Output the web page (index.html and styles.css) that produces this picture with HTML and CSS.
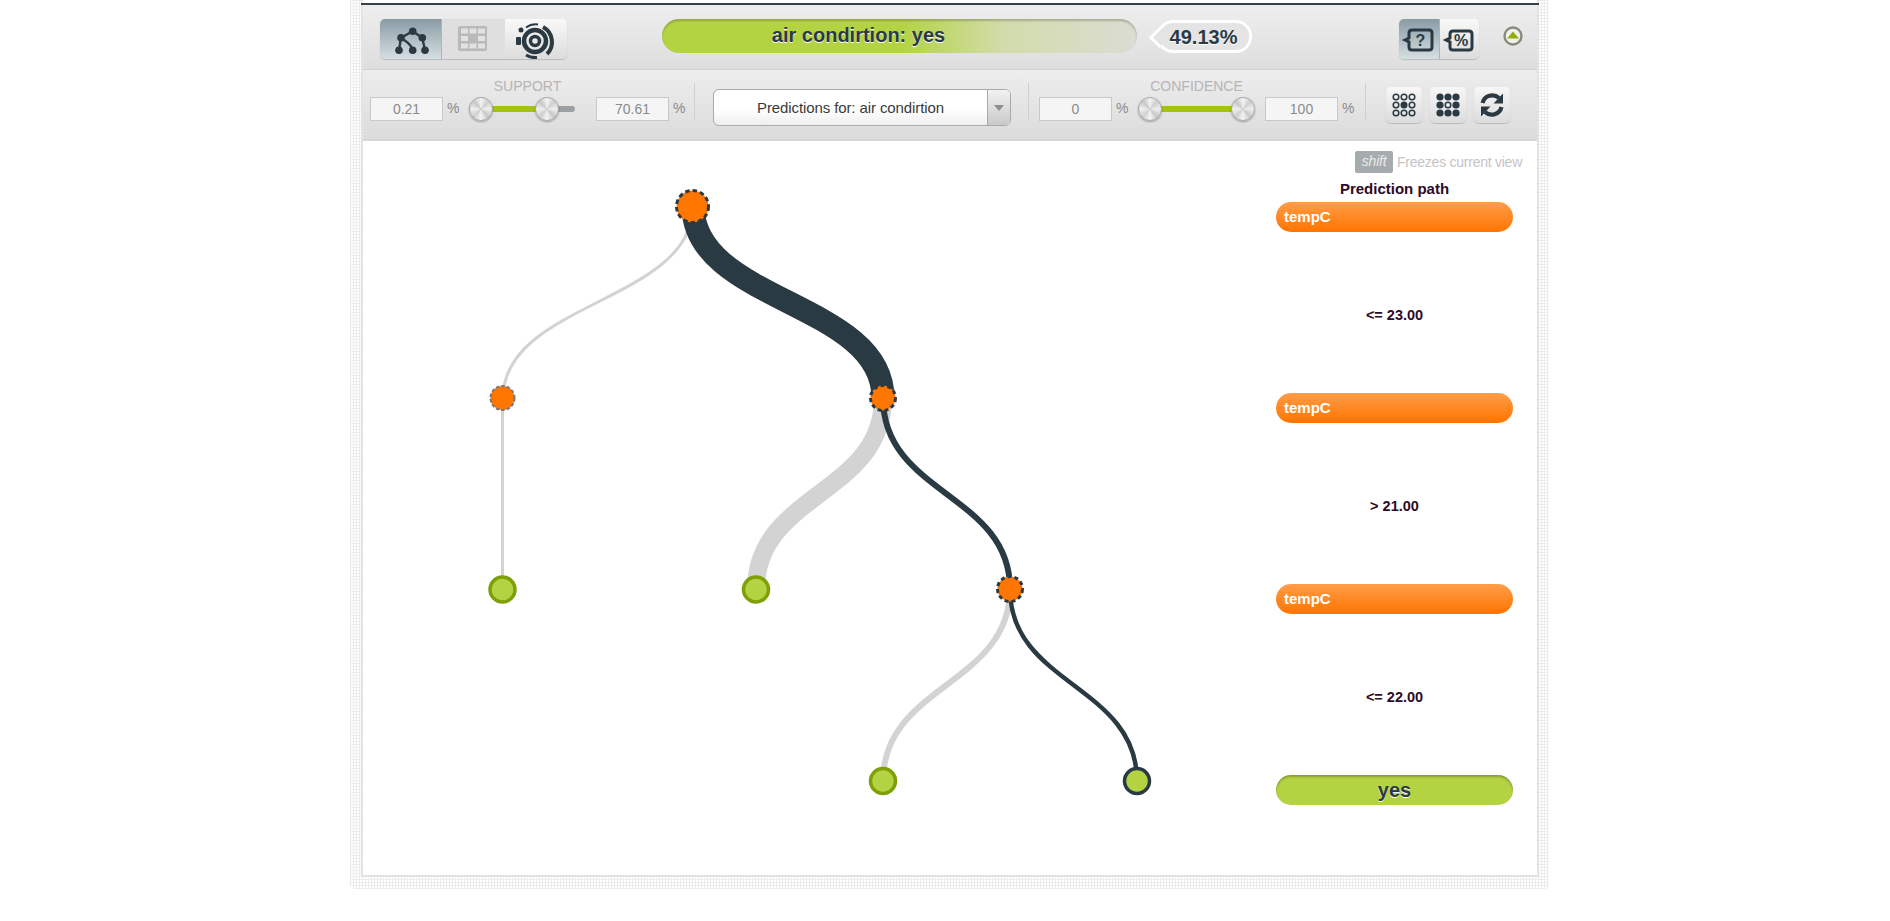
FILE: index.html

```html
<!DOCTYPE html>
<html>

<head>
    <meta charset="utf-8">
    <title>Decision tree</title>
    <link rel="stylesheet" href="styles.css">
</head>

<body>
<div class="frame">
    <div class="panel">
        <div class="topline"></div>

        <!--first toolbar row-->
        <div class="bar-top">
            <div class="btn-group views">
                <div class="tb active">
                    <svg viewBox="0 0 61 40" width="61" height="40">
                        <g fill="none" stroke="#2b3a42" stroke-width="2.400">
                            <path d="M32.700 12.300L21 18.700M32.700 12.300L42.300 18.700M21 18.700L19 31.300M42.300 18.700L45 31.300M21 18.700C26 23 31 24 32.700 31.300"/>
                        </g>
                        <g fill="#2b3a42">
                            <circle cx="32.700" cy="12.300" r="3.800"/>
                            <circle cx="21" cy="18.700" r="3.800"/>
                            <circle cx="42.300" cy="18.700" r="3.800"/>
                            <circle cx="19" cy="31.300" r="3.800"/>
                            <circle cx="32.700" cy="31.300" r="3.800"/>
                            <circle cx="45" cy="31.300" r="3.800"/>
                        </g>
                    </svg>
                </div>
                <div class="tb disabled">
                    <svg viewBox="0 0 63 40" width="63" height="40">
                        <rect x="16" y="7" width="29" height="25" rx="2" fill="#b9b9b9"/>
                        <g fill="#e2e2e2">
                            <rect x="19" y="9.500" width="7" height="5"/>
                            <rect x="27.500" y="9.500" width="7" height="5"/>
                            <rect x="36" y="9.500" width="7" height="5"/>
                            <rect x="19" y="17" width="7" height="5"/>
                            <rect x="36" y="17" width="7" height="5"/>
                            <rect x="19" y="24.500" width="7" height="5"/>
                            <rect x="27.500" y="24.500" width="7" height="5"/>
                            <rect x="36" y="24.500" width="7" height="5"/>
                        </g>
                    </svg>
                </div>
                <div class="tb">
                    <svg viewBox="0 0 62 40" width="62" height="40">
                        <g fill="none" stroke="#2b3a42">
                            <circle cx="30" cy="22" r="4.500" stroke-width="3.500"/>
                            <circle cx="30" cy="22" r="11" stroke-width="4.500"/>
                            <path d="M38 8A17 17 0 0 1 42 35" stroke-width="4"/>
                            <path d="M21 8.500A17 17 0 0 1 33 5.500" stroke-width="2"/>
                            <path d="M21 36A17 17 0 0 0 32 38.500" stroke-width="3"/>
                        </g>
                        <g fill="#2b3a42">
                            <circle cx="16" cy="11" r="2.500"/>
                            <rect x="11" y="18" width="5" height="8" rx="1"/>
                        </g>
                    </svg>
                </div>
            </div>

            <div class="progress">air condirtion: yes</div>
            <div class="bubble">49.13%</div>

            <div class="btn-group modes">
                <div class="tb active">
                    <svg viewBox="0 0 40 40" width="40" height="40">
                        <path d="M13 11H30Q33 11 33 14V28Q33 31 30 31H13Q10 31 10 28V23L6 21L10 19V14Q10 11 13 11Z" fill="none" stroke="#2b3a42" stroke-width="3"/>
                        <text x="21.500" y="26.500" class="icon-text">?</text>
                    </svg>
                </div>
                <div class="tb">
                    <svg viewBox="0 0 39 40" width="39" height="40">
                        <path d="M13 12H29Q32 12 32 15V28Q32 31 29 31H13Q10 31 10 28V23L6 21L10 19V15Q10 12 13 12Z" fill="none" stroke="#2b3a42" stroke-width="3"/>
                        <text x="21" y="27" class="icon-text">%</text>
                    </svg>
                </div>
            </div>

            <svg class="collapse" viewBox="0 0 20 20" width="20" height="20">
                <circle cx="10" cy="10" r="8.500" fill="#f1f1e6" stroke="#858a80" stroke-width="2.400"/>
                <path d="M4 12.500L10 5.500L16 12.500Z" fill="#8fae0c"/>
            </svg>
        </div>

        <!--second toolbar row-->
        <div class="bar-filters">
            <div class="range">
                <div class="range-label">SUPPORT</div>
                <div class="num">0.21</div>
                <div class="pct">%</div>
                <div class="slider">
                    <div class="track"></div>
                    <div class="fill" style="left:22px;width:66px"></div>
                    <div class="thumb" style="left:10px"></div>
                    <div class="thumb" style="left:76px"></div>
                </div>
                <div class="num">70.61</div>
                <div class="pct">%</div>
            </div>
            <div class="sep sep-a"></div>
            <div class="select">
                <div class="select-text">Predictions for: air condirtion</div>
                <div class="select-arrow"></div>
            </div>
            <div class="sep sep-b"></div>
            <div class="range range-conf">
                <div class="range-label">CONFIDENCE</div>
                <div class="num">0</div>
                <div class="pct">%</div>
                <div class="slider">
                    <div class="track"></div>
                    <div class="fill" style="left:22px;width:93px"></div>
                    <div class="thumb" style="left:10px"></div>
                    <div class="thumb" style="left:103px"></div>
                </div>
                <div class="num">100</div>
                <div class="pct">%</div>
            </div>
            <div class="sep sep-c"></div>
            <div class="tools">
                <div class="tool">
                    <svg viewBox="0 0 36 36" width="36" height="36">
                        <g fill="none" stroke="#2b3a42" stroke-width="1.500">
                            <circle cx="10" cy="10" r="2.800"/>
                            <circle cx="18" cy="10" r="2.800"/>
                            <circle cx="26" cy="10" r="2.800"/>
                            <circle cx="10" cy="18" r="2.800"/>
                            <circle cx="26" cy="18" r="2.800"/>
                            <circle cx="10" cy="26" r="2.800"/>
                            <circle cx="18" cy="26" r="2.800"/>
                            <circle cx="26" cy="26" r="2.800"/>
                        </g>
                        <circle cx="18" cy="18" r="3.500" fill="#2b3a42"/>
                    </svg>
                </div>
                <div class="tool">
                    <svg viewBox="0 0 36 36" width="36" height="36">
                        <g fill="#2b3a42">
                            <circle cx="10" cy="10" r="3.600"/>
                            <circle cx="18" cy="10" r="3.600"/>
                            <circle cx="26" cy="10" r="3.600"/>
                            <circle cx="10" cy="18" r="3.600"/>
                            <circle cx="26" cy="18" r="3.600"/>
                            <circle cx="10" cy="26" r="3.600"/>
                            <circle cx="18" cy="26" r="3.600"/>
                            <circle cx="26" cy="26" r="3.600"/>
                        </g>
                        <circle cx="18" cy="18" r="2.800" fill="none" stroke="#2b3a42" stroke-width="1.500"/>
                    </svg>
                </div>
                <div class="tool">
                    <svg viewBox="0 0 36 36" width="36" height="36">
                        <g>
                            <path d="M8.500 16A10 10 0 0 1 25 11" fill="none" stroke="#2b3a42" stroke-width="4.200"/>
                            <path d="M29 6.500V16.500H19.500Z" fill="#2b3a42"/>
                        </g>
                        <g transform="rotate(180 18 18)">
                            <path d="M8.500 16A10 10 0 0 1 25 11" fill="none" stroke="#2b3a42" stroke-width="4.200"/>
                            <path d="M29 6.500V16.500H19.500Z" fill="#2b3a42"/>
                        </g>
                    </svg>
                </div>
            </div>
        </div>

        <!--tree and prediction path-->
        <div class="canvas">
            <svg class="tree" viewBox="363 141 880 734" width="880" height="734">
                <g fill="none" stroke="#d3d3d3">
                    <path d="M693 206C693 302 503 302 503 398" stroke-width="3"/>
                    <path d="M502.500 398V589" stroke-width="3"/>
                    <path d="M883 398C883 494 756 494 756 589" stroke-width="18"/>
                    <path d="M1010 589C1010 685 883 685 883 781" stroke-width="6"/>
                </g>
                <g fill="none" stroke="#2a3a43">
                    <path d="M693 206C693 302 883 302 883 398" stroke-width="23"/>
                    <path d="M883 398C883 494 1010 494 1010 589" stroke-width="6"/>
                    <path d="M1010 589C1010 685 1137 685 1137 781" stroke-width="4.500"/>
                </g>
                <g fill="#ff7600" stroke="#2a3a43" stroke-width="3">
                    <circle cx="692.500" cy="206.500" r="16" stroke-dasharray="4.500 3"/>
                    <circle cx="883" cy="398" r="12.500" stroke-dasharray="4 3"/>
                    <circle cx="1010" cy="589" r="12.500" stroke-dasharray="4 3"/>
                    <circle cx="502.500" cy="398" r="12" stroke="#77777a" stroke-width="2" stroke-dasharray="3.500 2"/>
                </g>
                <g fill="#b3d343" stroke="#7f9f06" stroke-width="3.500">
                    <circle cx="502.500" cy="589.500" r="12.500"/>
                    <circle cx="756" cy="589.500" r="12.500"/>
                    <circle cx="883" cy="781" r="12.500"/>
                    <circle cx="1137" cy="781" r="12.500" stroke="#2a3a43"/>
                </g>
            </svg>

            <div class="side">
                <div class="hint"><span class="key">shift</span>Freezes current view</div>
                <div class="path">
                    <div class="path-title">Prediction path</div>
                    <div class="pill">tempC</div>
                    <div class="cond">&lt;= 23.00</div>
                    <div class="pill">tempC</div>
                    <div class="cond">&gt; 21.00</div>
                    <div class="pill">tempC</div>
                    <div class="cond">&lt;= 22.00</div>
                    <div class="pill pill-leaf">yes</div>
                </div>
            </div>
        </div>
    </div>
</div>
</body>

</html>
```

FILE: styles.css

```css
* {
    margin: 0px;
    padding: 0px;
    box-sizing: border-box;
}
body {
    background: #fff;
    font-family: "Liberation Sans", Arial, sans-serif;
}
.frame {
    width: 1199px;
    margin-left: 350px;
    padding: 0 10px 12px 11px;
    border-radius: 0 0 5px 5px;
    background-color: #fff;
    background-image:
        repeating-linear-gradient(0deg, #ececec 0, #ececec 1px, transparent 1px, transparent 3px),
        repeating-linear-gradient(90deg, #ececec 0, #ececec 1px, transparent 1px, transparent 3px);
}
.panel {
    border: 2px solid #e3e3e3;
    border-top: none;
    background: #fff;
    padding-top: 3px;
}
.topline {
    height: 2px;
    margin: 0 -2px;
    background: #3a4248;
}

/* toolbar */
.bar-top {
    display: flex;
    height: 65px;
    padding: 14px 0 0 17px;
    border-bottom: 1px solid #d2d2d2;
    background: linear-gradient(#eeeeee, #dedede);
}
.btn-group {
    display: flex;
    height: 40px;
    border-radius: 5px;
    box-shadow: 0 1px 1px #bbb;
}
.tb {
    height: 40px;
    background: linear-gradient(#f9f9f9, #dcdcdc);
}
.tb:first-child {
    border-radius: 5px 0 0 5px;
}
.tb:last-child {
    border-radius: 0 5px 5px 0;
}
.tb svg,
.tool svg {
    display: block;
}
.tb.active {
    background: linear-gradient(#8a9ba4, #d5dfe3);
    border-right: 1px solid #a9b6bc;
}
.tb.disabled {
    background: #dfdfdf;
}
.progress {
    width: 475px;
    height: 34px;
    margin-left: 95px;
    padding-right: 82px;
    border-radius: 17px;
    background: linear-gradient(90deg, #b3d343 0%, #b3d343 50%, #d2dcab 72%, #dcdcd4 100%);
    box-shadow: inset 0 2px 2px rgba(90, 90, 60, 0.35);
    text-align: center;
    font-size: 20px;
    font-weight: bold;
    line-height: 33px;
    color: #2b3a42;
    text-shadow: 0 1px 0 #fff;
}
.bubble {
    position: relative;
    width: 95px;
    height: 33px;
    margin: 1px 0 0 20px;
    padding-right: 2px;
    border: 3px solid #fff;
    border-radius: 16px;
    background: #e4e4e4;
    text-align: center;
    font-size: 20px;
    font-weight: bold;
    line-height: 29px;
    color: #2b3a42;
    text-shadow: 0 1px 0 #fff;
}
.bubble::before {
    content: "";
    position: absolute;
    left: -8px;
    top: 7px;
    width: 12px;
    height: 12px;
    transform: rotate(45deg);
    background: #e4e4e4;
    border-left: 3px solid #fff;
    border-bottom: 3px solid #fff;
}
.modes {
    margin-left: auto;
}
.collapse {
    margin: 7px 14px 0 24px;
}
.icon-text {
    font-size: 16px;
    font-weight: bold;
    fill: #2b3a42;
    text-anchor: middle;
}
.bar-filters {
    display: flex;
    align-items: flex-start;
    height: 71px;
    padding-left: 7px;
    border-bottom: 2px solid #d6d6d6;
    background: linear-gradient(#ededed, #dcdcdc);
}
.range {
    display: grid;
    grid-template-columns: 73px 16px 137px 73px 16px;
    grid-template-rows: 18px 24px;
    margin-top: 9px;
}
.range-label {
    grid-row: 1;
    grid-column: 3;
    text-align: center;
    font-size: 14px;
    line-height: 15px;
    color: #b5b5b5;
}
.num,
.pct,
.slider {
    grid-row: 2;
}
.num {
    height: 24px;
    border: 1px solid #c8c8c8;
    background: #f5f5f5;
    text-align: center;
    font-size: 14px;
    line-height: 22px;
    color: #8a8a8a;
}
.pct {
    padding-left: 4px;
    font-size: 14px;
    line-height: 22px;
    color: #8a8a8a;
}
.slider {
    position: relative;
    height: 24px;
}
.track {
    position: absolute;
    left: 10px;
    top: 9px;
    width: 106px;
    height: 6px;
    border-radius: 3px;
    background: #9a9fa3;
}
.fill {
    position: absolute;
    top: 9px;
    height: 6px;
    background: #a4c213;
}
.thumb {
    position: absolute;
    top: 0;
    width: 24px;
    height: 24px;
    border: 1px solid #a8a8a8;
    border-radius: 50%;
    background: conic-gradient(#f4f4f4, #cfcfcf 12%, #efefef 25%, #c8c8c8 38%, #f4f4f4 50%, #cfcfcf 62%, #efefef 75%, #c8c8c8 88%, #f4f4f4);
    box-shadow: 0 1px 2px rgba(0, 0, 0, 0.3);
}
.sep {
    width: 1px;
    height: 37px;
    margin-top: 13px;
    background: #cfcfcf;
}
.sep-a {
    margin-left: 9px;
}
.sep-b {
    margin-left: 17px;
}
.sep-c {
    margin-left: 11px;
}
.select {
    display: flex;
    width: 298px;
    height: 37px;
    margin: 19px 0 0 18px;
    border: 1px solid #a9a9a9;
    border-radius: 6px;
    overflow: hidden;
    background: linear-gradient(#ffffff 55%, #efefef);
}
.select-text {
    flex: 1;
    text-align: center;
    font-size: 15px;
    line-height: 36px;
    color: #3a3a3a;
    letter-spacing: -0.1px;
}
.select-arrow {
    position: relative;
    width: 23px;
    border-left: 1px solid #a9a9a9;
    background: linear-gradient(#f2f2f2, #c9c9c9);
}
.select-arrow::after {
    content: "";
    position: absolute;
    left: 6px;
    top: 15px;
    border-left: 5px solid transparent;
    border-right: 5px solid transparent;
    border-top: 6px solid #8e8e8e;
}
.range-conf {
    margin-left: 10px;
}
.tools {
    display: flex;
    gap: 8px;
    margin: 17px 0 0 20px;
}
.tool {
    width: 36px;
    height: 36px;
    border-radius: 5px;
    background: linear-gradient(#f7f7f7, #dcdcdc);
    box-shadow: 0 1px 1px #bbb;
}

/* tree */
.canvas {
    display: flex;
    height: 734px;
    background: #fff;
}
.tree {
    display: block;
    flex: none;
}
.side {
    width: 261px;
    margin-left: 33px;
    padding-top: 10px;
}
.hint {
    display: flex;
    justify-content: flex-end;
    align-items: center;
    height: 22px;
    padding-right: 15px;
    font-size: 14px;
    color: #c4c4c4;
    letter-spacing: -0.25px;
}
.key {
    width: 38px;
    height: 22px;
    margin-right: 4px;
    border-radius: 2px;
    background: #a6abae;
    text-align: center;
    font-style: italic;
    line-height: 21px;
    color: #e9e9e9;
}
.path {
    width: 237px;
}
.path-title {
    height: 29px;
    text-align: center;
    font-size: 15px;
    font-weight: bold;
    line-height: 32px;
    color: #2d0a26;
}
.pill {
    height: 30px;
    padding-left: 8px;
    border-radius: 15px;
    background: linear-gradient(#ff9d48, #ff7400);
    font-size: 15px;
    font-weight: bold;
    line-height: 30px;
    color: #fff;
}
.pill-leaf {
    padding-left: 0;
    background: #b3d343;
    box-shadow: inset 0 2px 2px rgba(90, 90, 30, 0.45);
    text-align: center;
    font-size: 20px;
    color: #2b3a42;
    text-shadow: 0 1px 0 #fff;
}
.cond {
    height: 161px;
    padding-top: 4px;
    text-align: center;
    font-size: 14.500px;
    font-weight: bold;
    line-height: 158px;
    color: #2d0a26;
}
```
